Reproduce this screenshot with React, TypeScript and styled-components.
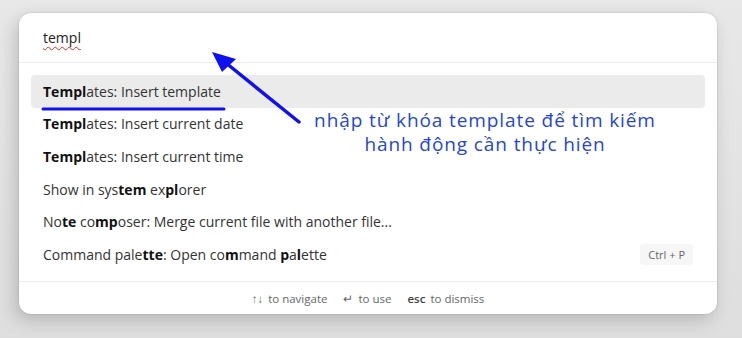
import React from 'react';
import styled, { createGlobalStyle } from 'styled-components';

const GlobalStyle = createGlobalStyle`
  html, body {
    margin: 0;
    padding: 0;
    width: 742px;
    height: 338px;
    overflow: hidden;
    background: #e3e3e3;
  }
`;

const Page = styled.div`
  position: relative;
  width: 742px;
  height: 338px;
  box-sizing: border-box;
  padding: 13px 0 0 19px;
  background: linear-gradient(180deg, #e8e8e8 0%, #e2e2e2 60%, #dedede 100%);
  font-family: 'Segoe UI', 'Open Sans', 'Noto Sans', sans-serif;
`;

const Modal = styled.div`
  width: 698px;
  height: 301px;
  background: #ffffff;
  border-radius: 12px;
  box-shadow: 0 0 0 1px rgba(0, 0, 0, 0.06), -4px 6px 18px rgba(0, 0, 0, 0.18);
  display: flex;
  flex-direction: column;
  overflow: hidden;
`;

const InputBar = styled.div`
  height: 49px;
  display: flex;
  align-items: center;
  padding: 0 24px;
  border-bottom: 1px solid #ececec;
  font-size: 14px;
  color: #222;
`;

const Typed = styled.span`
  text-decoration: underline wavy #e0301e;
  text-decoration-thickness: 1px;
  text-underline-offset: 3px;
`;

const ResultList = styled.div`
  flex: 1;
  display: flex;
  flex-direction: column;
  padding: 12px 12px 8px;
`;

const Row = styled.div<{ $active?: boolean }>`
  height: 32.6px;
  display: flex;
  align-items: center;
  justify-content: space-between;
  padding: 0 12px;
  border-radius: 4px;
  background: ${(p) => (p.$active ? '#ebebeb' : 'transparent')};
  font-size: 14px;
  color: #333;
  white-space: nowrap;
`;

const Match = styled.b`
  font-weight: 700;
  color: #111;
`;

const Hotkey = styled.span`
  font-size: 11px;
  color: #666;
  background: #f6f6f6;
  border-radius: 4px;
  padding: 3px 8px;
`;

const Footer = styled.div`
  height: 32px;
  border-top: 1px solid #ececec;
  display: flex;
  align-items: center;
  justify-content: center;
  gap: 16px;
  font-size: 11.5px;
  color: #666;
`;

const Hint = styled.span`
  display: flex;
  gap: 5px;
`;

const HintKey = styled.span<{ $bold?: boolean }>`
  font-weight: ${(p) => (p.$bold ? 600 : 400)};
  color: ${(p) => (p.$bold ? '#444' : '#666')};
`;

const Drawing = styled.svg`
  position: absolute;
  left: 0;
  top: 0;
  pointer-events: none;
`;

const Note = styled.div`
  position: absolute;
  left: 285px;
  top: 108px;
  width: 400px;
  text-align: center;
  font-family: 'Open Sans', 'Noto Sans', sans-serif;
  font-size: 19px;
  letter-spacing: 0.9px;
  line-height: 24px;
  color: #2545d8;
`;

type Part = [string, boolean];

const rows: { parts: Part[]; hotkey?: string }[] = [
  { parts: [['Templ', true], ['ates: Insert template', false]] },
  { parts: [['Templ', true], ['ates: Insert current date', false]] },
  { parts: [['Templ', true], ['ates: Insert current time', false]] },
  { parts: [['Show in sys', false], ['tem', true], [' ex', false], ['pl', true], ['orer', false]] },
  {
    parts: [
      ['No', false],
      ['te', true],
      [' co', false],
      ['mp', true],
      ['oser: Merge current file with another file...', false],
    ],
  },
  {
    parts: [
      ['Command pale', false],
      ['tte', true],
      [': Open co', false],
      ['m', true],
      ['mand ', false],
      ['p', true],
      ['a', false],
      ['l', true],
      ['ette', false],
    ],
    hotkey: 'Ctrl + P',
  },
];

export default function App() {
  return (
    <>
      <GlobalStyle />
      <Page>
        <Modal>
          <InputBar>
            <Typed>templ</Typed>
          </InputBar>
          <ResultList>
            {rows.map((r, i) => (
              <Row key={i} $active={i === 0}>
                <span>
                  {r.parts.map(([t, b], j) => (b ? <Match key={j}>{t}</Match> : <span key={j}>{t}</span>))}
                </span>
                {r.hotkey && <Hotkey>{r.hotkey}</Hotkey>}
              </Row>
            ))}
          </ResultList>
          <Footer>
            <Hint>
              <HintKey>↑↓</HintKey> to navigate
            </Hint>
            <Hint>
              <HintKey>↵</HintKey> to use
            </Hint>
            <Hint>
              <HintKey $bold>esc</HintKey> to dismiss
            </Hint>
          </Footer>
        </Modal>

        <Drawing width="742" height="338" viewBox="0 0 742 338">
          <line x1="43" y1="109" x2="224" y2="109" stroke="#1010f0" strokeWidth="3" strokeLinecap="round" />
          <line x1="299" y1="122" x2="226" y2="63" stroke="#1010f0" strokeWidth="3.5" strokeLinecap="round" />
          <polygon points="212,52 236,59 222,72" fill="#1010f0" />
        </Drawing>
        <Note>
          nhập từ khóa template để tìm kiếm
          <br />
          hành động cần thực hiện
        </Note>
      </Page>
    </>
  );
}
